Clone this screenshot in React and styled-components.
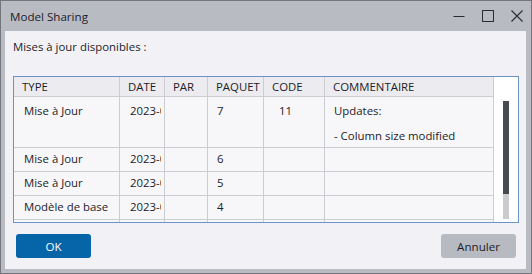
import React from "react";
import styled, { createGlobalStyle } from "styled-components";

const GlobalStyle = createGlobalStyle`
  html, body { margin: 0; padding: 0; background: #b9bbc2; }
  * { box-sizing: border-box; }
  body { font-family: "Open Sans", "Noto Sans", sans-serif; }
`;

const Window = styled.div`
  width: 532px;
  height: 274px;
  border: 1px solid #74767c;
  background: #b9bbc2;
  display: flex;
  flex-direction: column;
  color: #1c1c2b;
  font-size: 11.4px;
`;

const TitleBar = styled.div`
  height: 30px;
  display: flex;
  align-items: center;
  padding-left: 9px;
`;

const Title = styled.div`
  flex: 1;
  font-size: 11.6px;
  padding-top: 1px;
`;

const Controls = styled.div`
  display: flex;
  align-self: stretch;
`;

const CtrlButton = styled.div`
  width: 29px;
  display: flex;
  align-items: center;
  justify-content: center;
`;

const Content = styled.div`
  flex: 1;
  margin: 0 5px 4px 4px;
  background: #f2f2f6;
  display: flex;
  flex-direction: column;
`;

const Label = styled.div`
  padding: 8px 8px 0 8px;
  height: 45px;
`;

const TableBox = styled.div`
  margin: 0 7px 0 8px;
  height: 147px;
  border: 1px solid #6c93c6;
  display: flex;
  overflow: hidden;
`;

const Grid = styled.div`
  display: grid;
  grid-template-columns: 106px 45px 43px 56px 61px 169px;
  grid-auto-rows: 24px;
  grid-template-rows: 20px 51px;
  align-content: start;
  background: #f7f7f9;
`;

const HeadCell = styled.div`
  background: #ececf0;
  border-right: 1px solid #cbcdd3;
  border-bottom: 1px solid #cbcdd3;
  padding-left: 8px;
  display: flex;
  align-items: center;
  white-space: nowrap;
  overflow: hidden;
`;

const Cell = styled.div`
  border-right: 1px solid #cbcdd3;
  border-bottom: 1px solid #cbcdd3;
  padding-left: ${(p) => p.$pad ?? 10}px;
  padding-top: ${(p) => (p.$top ? 8 : 0)}px;
  display: flex;
  align-items: ${(p) => (p.$top ? "flex-start" : "center")};
  white-space: ${(p) => (p.$multi ? "pre-line" : "nowrap")};
  line-height: 12.5px;
  overflow: hidden;
`;

const Clipped = styled.span`
  display: block;
  max-width: 31px;
  overflow: hidden;
  white-space: nowrap;
`;

const ScrollArea = styled.div`
  flex: 1;
  background: #ffffff;
  display: flex;
  justify-content: center;
  padding: 24px 0 0 0;
`;

const Track = styled.div`
  width: 6px;
  height: 118px;
  background: #c9cbd1;
  display: flex;
  flex-direction: column;
`;

const Thumb = styled.div`
  height: 93px;
  background: #464b51;
`;

const Footer = styled.div`
  flex: 1;
  display: flex;
  justify-content: space-between;
  align-items: flex-start;
  padding: 11px 10px 0 11px;
`;

const Button = styled.div`
  width: 75px;
  height: 24px;
  border-radius: 3px;
  display: flex;
  align-items: center;
  justify-content: center;
  background: ${(p) => (p.$primary ? "#0565a8" : "#b8bac1")};
  color: ${(p) => (p.$primary ? "#ffffff" : "#1c1c2b")};
  font-size: 11.6px;
`;

const columns = ["TYPE", "DATE", "PAR", "PAQUET", "CODE", "COMMENTAIRE"];

const rows = [
  { type: "Mise à Jour", date: "2023-06-14", par: "", paquet: "7", code: "11", comment: "Updates:\n\n- Column size modified", tall: true },
  { type: "Mise à Jour", date: "2023-06-12", par: "", paquet: "6", code: "", comment: "" },
  { type: "Mise à Jour", date: "2023-06-09", par: "", paquet: "5", code: "", comment: "" },
  { type: "Modèle de base", date: "2023-06-01", par: "", paquet: "4", code: "", comment: "" },
  { type: "", date: "", par: "", paquet: "", code: "", comment: "" },
];

const pads = [10, 10, 10, 9, 15, 9];

export default function App() {
  return (
    <>
      <GlobalStyle />
      <Window>
        <TitleBar>
          <Title>Model Sharing</Title>
          <Controls>
            <CtrlButton>
              <svg width="12" height="12" viewBox="0 0 12 12">
                <line x1="0.5" y1="6.5" x2="11.5" y2="6.5" stroke="#2b2b33" strokeWidth="1" />
              </svg>
            </CtrlButton>
            <CtrlButton>
              <svg width="12" height="12" viewBox="0 0 12 12">
                <rect x="0.5" y="0.5" width="11" height="11" fill="none" stroke="#2b2b33" strokeWidth="1" />
              </svg>
            </CtrlButton>
            <CtrlButton>
              <svg width="12" height="12" viewBox="0 0 12 12">
                <path d="M0.5 0.5 L11.5 11.5 M11.5 0.5 L0.5 11.5" stroke="#2b2b33" strokeWidth="1.1" fill="none" />
              </svg>
            </CtrlButton>
          </Controls>
        </TitleBar>
        <Content>
          <Label>Mises à jour disponibles :</Label>
          <TableBox>
            <Grid>
              {columns.map((c) => (
                <HeadCell key={c}>{c}</HeadCell>
              ))}
              {rows.map((r, i) =>
                [r.type, r.date, r.par, r.paquet, r.code, r.comment].map((v, j) => (
                  <Cell
                    key={`${i}-${j}`}
                    $pad={pads[j]}
                    $top={r.tall}
                    $multi={j === 5}
                  >
                    {j === 1 ? <Clipped>{v}</Clipped> : v}
                  </Cell>
                ))
              )}
            </Grid>
            <ScrollArea>
              <Track>
                <Thumb />
              </Track>
            </ScrollArea>
          </TableBox>
          <Footer>
            <Button $primary>OK</Button>
            <Button>Annuler</Button>
          </Footer>
        </Content>
      </Window>
    </>
  );
}
